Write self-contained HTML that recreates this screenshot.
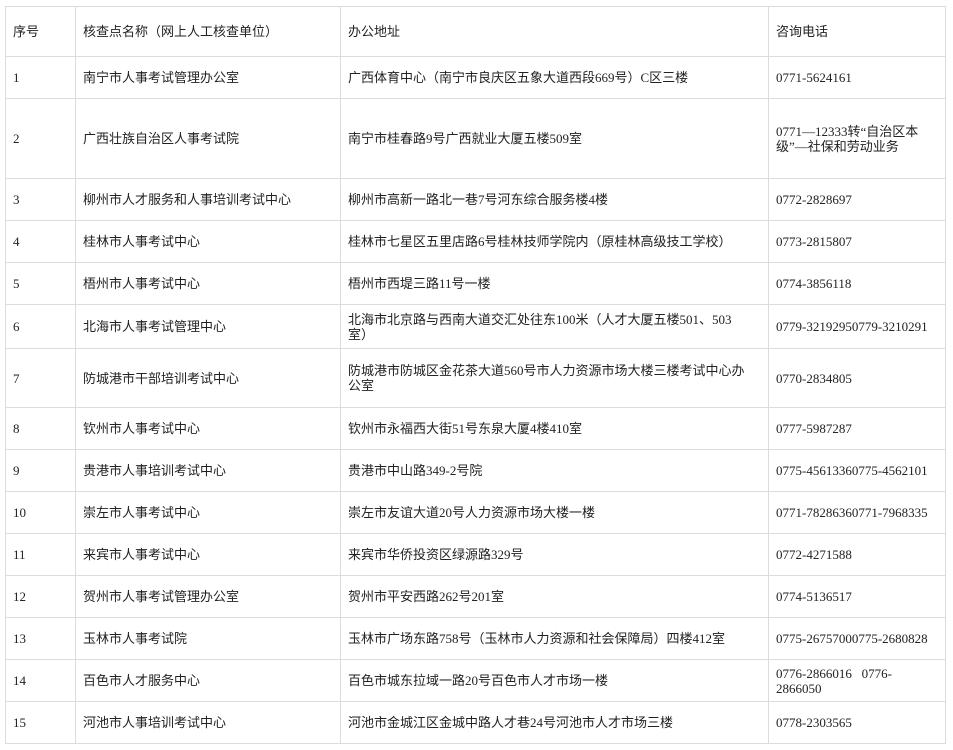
<!DOCTYPE html>
<html><head><meta charset="utf-8"><style>
body{margin:0;background:#fff;}
table{position:absolute;left:5px;top:6px;border-collapse:collapse;table-layout:fixed;width:940px;font-family:"Liberation Serif","Noto Sans CJK SC",serif;font-size:13px;color:#222;}
td{border:1px solid #dcdcdc;padding:0 4px 0 7px;vertical-align:middle;line-height:15px;white-space:nowrap;overflow:hidden;}
</style></head><body>
<table>
<colgroup><col style="width:70px"><col style="width:265px"><col style="width:428px"><col style="width:177px"></colgroup>
<tr style="height:50px"><td>序号</td><td>核查点名称（网上人工核查单位）</td><td>办公地址</td><td>咨询电话</td></tr>
<tr style="height:42px"><td>1</td><td>南宁市人事考试管理办公室</td><td>广西体育中心（南宁市良庆区五象大道西段669号）C区三楼</td><td>0771-5624161</td></tr>
<tr style="height:80px"><td>2</td><td>广西壮族自治区人事考试院</td><td>南宁市桂春路9号广西就业大厦五楼509室</td><td>0771—12333转“自治区本<br>级”—社保和劳动业务</td></tr>
<tr style="height:42px"><td>3</td><td>柳州市人才服务和人事培训考试中心</td><td>柳州市高新一路北一巷7号河东综合服务楼4楼</td><td>0772-2828697</td></tr>
<tr style="height:42px"><td>4</td><td>桂林市人事考试中心</td><td>桂林市七星区五里店路6号桂林技师学院内（原桂林高级技工学校）</td><td>0773-2815807</td></tr>
<tr style="height:42px"><td>5</td><td>梧州市人事考试中心</td><td>梧州市西堤三路11号一楼</td><td>0774-3856118</td></tr>
<tr style="height:44px"><td>6</td><td>北海市人事考试管理中心</td><td>北海市北京路与西南大道交汇处往东100米（人才大厦五楼501、503<br>室）</td><td>0779-32192950779-3210291</td></tr>
<tr style="height:59px"><td>7</td><td>防城港市干部培训考试中心</td><td>防城港市防城区金花茶大道560号市人力资源市场大楼三楼考试中心办<br>公室</td><td>0770-2834805</td></tr>
<tr style="height:42px"><td>8</td><td>钦州市人事考试中心</td><td>钦州市永福西大街51号东泉大厦4楼410室</td><td>0777-5987287</td></tr>
<tr style="height:42px"><td>9</td><td>贵港市人事培训考试中心</td><td>贵港市中山路349-2号院</td><td>0775-45613360775-4562101</td></tr>
<tr style="height:42px"><td>10</td><td>崇左市人事考试中心</td><td>崇左市友谊大道20号人力资源市场大楼一楼</td><td>0771-78286360771-7968335</td></tr>
<tr style="height:42px"><td>11</td><td>来宾市人事考试中心</td><td>来宾市华侨投资区绿源路329号</td><td>0772-4271588</td></tr>
<tr style="height:42px"><td>12</td><td>贺州市人事考试管理办公室</td><td>贺州市平安西路262号201室</td><td>0774-5136517</td></tr>
<tr style="height:42px"><td>13</td><td>玉林市人事考试院</td><td>玉林市广场东路758号（玉林市人力资源和社会保障局）四楼412室</td><td>0775-26757000775-2680828</td></tr>
<tr style="height:42px"><td>14</td><td>百色市人才服务中心</td><td>百色市城东拉域一路20号百色市人才市场一楼</td><td>0776-2866016&nbsp;&nbsp; 0776-<br>2866050</td></tr>
<tr style="height:42px"><td>15</td><td>河池市人事培训考试中心</td><td>河池市金城江区金城中路人才巷24号河池市人才市场三楼</td><td>0778-2303565</td></tr>
</table>
</body></html>
